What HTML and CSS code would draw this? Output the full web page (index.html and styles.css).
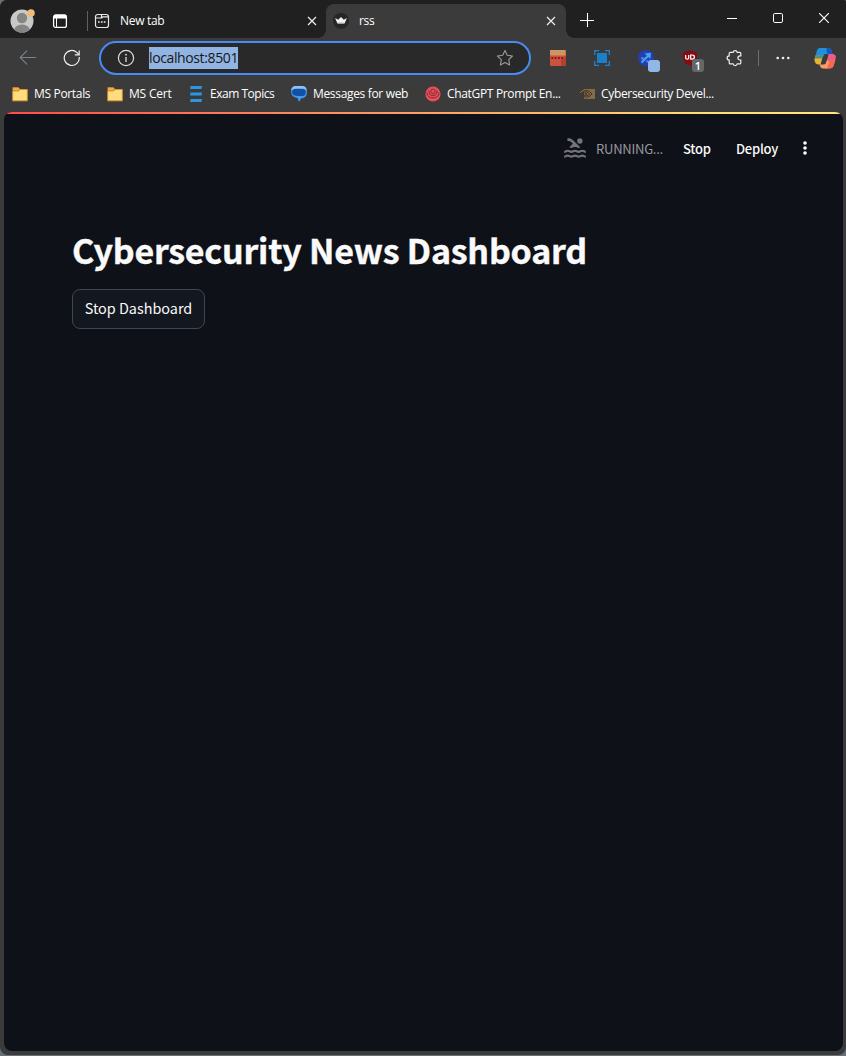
FILE: index.html
```html
<!DOCTYPE html>
<html lang="en">
<head>
<meta charset="utf-8">
<title>rss</title>
<link rel="stylesheet" href="styles.css">
</head>
<body>
<div class="window">
  <header class="tabbar">
    <svg class="avatar" width="26" height="26" viewBox="0 0 26 26"><defs><clipPath id="head"><circle cx="13" cy="14" r="11.5"/></clipPath></defs><g clip-path="url(#head)"><path fill="#c9c9c8" d="M0 0h26v26H0z"/><circle cx="13" cy="11" r="5.2" fill="#858585"/><ellipse cx="13" cy="23.5" rx="8" ry="6" fill="#858585"/></g><circle cx="22" cy="6" r="3.8" fill="#f0bb78"/></svg>
    <svg class="workspaces" width="16" height="16" viewBox="0 0 16 16"><rect x="1.6" y="2" width="12.8" height="12.4" rx="2" fill="none" stroke="#fff" stroke-width="1.3"/><path fill="#fff" d="M2 2h12v3.4H2z"/><path stroke="#fff" d="M4.5 5v9"/></svg>
    <div class="tab tab-first">
      <svg width="16" height="16" viewBox="0 0 16 16" fill="none" stroke="#e8e8e8" stroke-width="1.2"><rect x="1.5" y="1.5" width="13" height="13" rx="2.2"/><path d="M1.500 5h6.200l1.200-1.200h5.600M7.500 1.700v2.900"/><path d="M4 9h1.700m1.200 0h1.700m1.200 0h1.700" stroke-width="1.7"/></svg>
      <span class="tab-title new-title">New tab</span>
      <svg class="close" width="10" height="10" viewBox="0 0 10 10"><path d="M1 1l8 8M9 1L1 9" stroke="#eee" stroke-width="1.2"/></svg>
    </div>
    <div class="tab active">
      <svg width="16" height="16" viewBox="0 0 16 16"><circle cx="8" cy="8" r="8" fill="#262626"/><path fill="#f2f2f2" d="M2.1 5l3.1 1.8L8 4l2.8 2.8 3.1-1.8-2.1 5q-.2.6-.9.6H5.1q-.7 0-.9-.6z"/><path fill="#b6b6b6" d="M4.4 9.4h7.2l-.5 1.2H4.9z"/></svg>
      <span class="tab-title rss-title">rss</span>
      <svg class="close" width="10" height="10" viewBox="0 0 10 10"><path d="M1 1l8 8M9 1L1 9" stroke="#eee" stroke-width="1.2"/></svg>
    </div>
    <svg class="plus" width="14" height="14" viewBox="0 0 14 14"><path d="M7.5 0v14M0 7.5h14" stroke="#fff" stroke-width="1.1"/></svg>
    <svg class="minimize" width="10" height="10" viewBox="0 0 10 10"><path d="M0 5.5h10" stroke="#fff"/></svg>
    <svg class="maximize" width="10" height="10" viewBox="0 0 10 10"><rect x=".5" y=".5" width="9" height="9" rx="1.3" fill="none" stroke="#fff"/></svg>
    <svg class="quit" width="10" height="10" viewBox="0 0 10 10"><path d="M0 0l10 10M10 0L0 10" stroke="#fff" stroke-width="1.1"/></svg>
  </header>

  <nav class="toolbar">
    <div class="slot back"><svg width="18" height="16" viewBox="0 0 18 16" fill="none" stroke="#77828b" stroke-width="1.1"><path d="M17 7.5H1.5M8 .7L1.2 7.5 8 14.3"/></svg></div>
    <div class="slot refresh"><svg width="18" height="18" viewBox="0 0 18 18" fill="none" stroke="#eee" stroke-width="1.2"><path d="M16.2 8a7.5 7.5 0 1 1-2.2-4.4l2 2"/><path d="M16.2 1.4v4.4h-4.4"/></svg></div>
    <div class="address">
      <svg class="info" width="18" height="18" viewBox="0 0 18 18"><circle cx="9" cy="9" r="7.6" fill="none" stroke="#ddd" stroke-width="1.2"/><path d="M9 8v5" stroke="#ddd" stroke-width="1.3"/><circle cx="9" cy="5.7" r=".9" fill="#ddd"/></svg>
      <span class="url">localhost:8501</span>
      <svg class="star" width="18" height="18" viewBox="0 0 18 18"><path d="M9 1.5l2.3 4.8 5.2.7-3.8 3.6.9 5.3L9 13.4l-4.6 2.5.9-5.3L1.5 7l5.2-.7z" fill="none" stroke="#9b9b9b" stroke-width="1.1" stroke-linejoin="round"/></svg>
    </div>
    <div class="slot ext-first"><svg width="16" height="16" viewBox="0 0 16 16"><rect width="16" height="16" rx="1" fill="#c9533c"/><path fill="#cd9563" d="M0 0h15.5v5.5H0z"/><path fill="#b44130" d="M11 10l5-4v9q0 1-1 1h-4z"/><g fill="#86100e"><circle cx="2.3" cy="8" r="1.1"/><circle cx="5.6" cy="8" r="1.1"/><circle cx="8.9" cy="8" r="1.1"/><circle cx="12.2" cy="8" r="1.1"/></g></svg></div>
    <div class="slot"><svg width="16" height="16" viewBox="0 0 16 16"><path fill="#1b80cb" d="M3 3h10v10H3z"/><path d="M.7 5V.7H5M11 .7h4.3V5M15.3 11v4.3H11M5 15.3H.7V11" fill="none" stroke="#2184c9" stroke-width="1.3"/></svg></div>
    <div class="slot"><svg class="ext-badged" width="24" height="24" viewBox="0 0 24 24"><circle cx="9" cy="9" r="8" fill="#263db7"/><path d="M4.5 13.5l7-7" stroke="#42a6e8" stroke-width="2.2"/><path d="M7.5 4.5l6.5-.7-.7 6.3zM4 8l3.5 1L5 11zM9 11l1 3 1.5-2z" fill="#42a6e8"/><rect x="11" y="11" width="12" height="12" rx="3" fill="#91b7e8"/></svg></div>
    <div class="slot ublock"><svg width="16" height="16" viewBox="0 0 16 16"><path fill="#850c12" d="M8 0Q11 2 15 2v6q0 5-7 8-7-3-7-8V2q4 0 7-2z"/><path d="M3.7 5v3q0 1.2 1.5 1.2T6.7 8V5M8.7 5v4.2h1.4q2.3 0 2.3-2.1T10.1 5z" fill="none" stroke="#fff" stroke-width="1.2"/></svg><span class="badge">1</span></div>
    <div class="slot puzzle"><svg width="18" height="18" viewBox="0 0 18 18"><path d="M4.2 3.3h2.9a2.1 2.1 0 0 1 4.1 0h2.6q1 0 1 1v2.5H14a2.1 2.1 0 0 0 0 4.2h.8v2.9q0 1-1 1h-2.6a2.1 2.1 0 0 1-4.1 0H4.2q-1 0-1-1v-2.8a2.1 2.1 0 0 1 0-4.2V4.3q0-1 1-1z" fill="none" stroke="#eee" stroke-width="1.2"/></svg></div>
    <i class="divider"></i>
    <div class="slot more"><svg width="14" height="4" viewBox="0 0 14 4" fill="#eee"><circle cx="1.7" cy="2" r="1.3"/><circle cx="7" cy="2" r="1.3"/><circle cx="12.3" cy="2" r="1.3"/></svg></div>
    <svg class="copilot" width="22" height="21" viewBox="0 0 22 21"><path fill="#218fdc" d="M6 0h8q3 0 3.7 3l.8 3H12q-2 0-2.6 2L8.6 10H1l1.8-7q.8-3 3.2-3z"/><path fill="#1459b9" d="M12.5 0h2q2.2 0 3.2 3l.8 3H14q-2-2-1.5-6z"/><path fill="#5c8f7c" d="M1.6 7h7.6l-1 4H1Q0 9.500 1.600 7z"/><path fill="#e6b335" d="M.3 10.500h7.900l-1.600 5.900H4.500Q1.500 16.400 .8 13.500z"/><path fill="#e95d87" d="M14.500 6H18.500q3.500 0 3.400 3.500l-2 7.500q-1 3.500-4.500 3.500H11z"/><path fill="#f46a50" d="M13 12h8.300l-1.400 5q-1 3.500-4.500 3.500H11z"/><path fill="#f99a69" d="M5.500 16.400H10q1.500 0 2.200-2l1-3 2 3-2 6.100H9Q6.500 20.500 5.500 16.400z"/><path fill="#3b3b3b" d="M10.500 6.500h3.700L11.800 14H8.200z"/></svg>
  </nav>

  <nav class="bookmarks">
    <div class="mark portals"><svg width="16" height="16" viewBox="0 0 16 16"><path fill="#dc8b2b" d="M.5 1.2h6l1.7 1.7h7.3v12.4H.5z"/><path fill="#ffdd7d" stroke="#c9852f" stroke-width=".7" d="M.7 5h5.6l2-1.500h7v11.200H.7z"/><path fill="#f0ad50" d="M1 1.800h5l1.200 1.300L6 4.300H1z"/></svg><span>MS Portals</span></div>
    <div class="mark cert"><svg width="16" height="16" viewBox="0 0 16 16"><path fill="#dc8b2b" d="M.5 1.2h6l1.7 1.7h7.3v12.4H.5z"/><path fill="#ffdd7d" stroke="#c9852f" stroke-width=".7" d="M.7 5h5.6l2-1.500h7v11.200H.7z"/><path fill="#f0ad50" d="M1 1.800h5l1.200 1.300L6 4.300H1z"/></svg><span>MS Cert</span></div>
    <div class="mark exam"><svg width="12" height="16" viewBox="0 0 12 16"><path fill="#2b95e6" d="M.5 0H12l-.5 3H0zM.5 6.500H12l-.5 3H0zM.5 13H12l-.5 3H0z"/></svg><span>Exam Topics</span></div>
    <div class="mark messages"><svg width="16" height="16" viewBox="0 0 16 16"><path fill="#4298ec" d="M5 0h6q5 0 5 6t-6 6.500L8 16l-1.500-4Q0 11 0 5.500T5 0z"/><path fill="#8fc4f2" d="M.2 4Q1 0 5 0h6q4 0 4.700 4l-4-1H5z"/><path fill="#1252a6" d="M5 2.700h6.500q3.300 0 3.300 3.600T11.500 10H7Q1 10 1 6.300T5 2.700z"/></svg><span>Messages for web</span></div>
    <div class="mark chatgpt"><svg width="16" height="16" viewBox="0 0 16 16"><circle cx="8" cy="8" r="7.6" fill="#ed4c58"/><g fill="none" stroke="#662e35" stroke-width=".9"><circle cx="8" cy="5.300" r="2.200"/><path d="M4 4.500q-.4 5 4 5t4-5M2 6.500q.2 5.400 6 5.400t6-5.400"/></g></svg><span>ChatGPT Prompt En...</span></div>
    <div class="mark cyber"><svg width="16" height="16" viewBox="0 0 16 16"><path fill="#806c49" d="M5 3h11v10H5z"/><path d="M.5 7.500Q4 3.800 8 4.500q3 .5 5 3.500-2.500 3.400-6 3.200Q3 11 .5 7.500zm2.600 0Q5 5.700 7.500 6q2 .2 3.200 2-1.500 1.800-3.500 1.600-2.500-.2-4.100-2.100z" fill="none" stroke="#4c3525" stroke-width="1"/><path d="M1 7q2-2.600 4-2.800" stroke="#927746" fill="none"/><circle cx="7" cy="7.800" r="1" fill="#4c3525"/></svg><span>Cybersecurity Devel...</span></div>
  </nav>

  <main class="app">
    <div class="progress"></div>
    <div class="status">
      <svg class="swimmer" width="26" height="26" viewBox="0 0 24 24" fill="#737379"><path d="m10 8-3.250 3.250c.31.12.56.27.77.39.37.23.59.36 1.150.36s.78-.13 1.150-.36c.46-.27 1.080-.64 2.190-.64s1.730.37 2.180.64c.37.22.6.36 1.150.36.55 0 .78-.13 1.150-.36.12-.07.26-.15.41-.23L10.480 5C8.930 3.450 7.500 2.990 5 3v2.500c1.820-.01 2.890.39 4 1.500l1 1z"/><circle cx="16.500" cy="5.500" r="2.500"/><path d="M2 15.500c1.670 0 1.670-1 3.330-1s1.670 1 3.340 1 1.660-1 3.330-1 1.670 1 3.330 1 1.670-1 3.340-1 1.660 1 3.330 1M2 20c1.670 0 1.670-1 3.330-1s1.670 1 3.340 1 1.660-1 3.330-1 1.670 1 3.330 1 1.670-1 3.340-1 1.660 1 3.330 1" fill="none" stroke="#737379" stroke-width="2"/></svg>
      <span class="running">RUNNING...</span><span class="stop">Stop</span><span class="deploy">Deploy</span>
      <svg class="kebab" width="4" height="14" viewBox="0 0 4 14" fill="#fff"><circle cx="2" cy="2" r="1.8"/><circle cx="2" cy="7" r="1.8"/><circle cx="2" cy="12" r="1.8"/></svg>
    </div>
    <section class="content">
      <h1>Cybersecurity News Dashboard</h1>
      <button class="stop-dashboard">Stop Dashboard</button>
    </section>
  </main>
</div>
</body>
</html>
```

FILE: styles.css
```css
* { box-sizing: border-box; }
body { margin: 0; background: #68717a; font-family: "Open Sans", "Noto Sans", sans-serif; }
svg { display: block; flex: none; }
span { white-space: nowrap; }
.window { width: 846px; height: 1055px; display: flex; flex-direction: column; background: #3b3b3b; border-radius: 7px 2px 8px 8px; overflow: hidden; }

.tabbar { height: 38px; display: flex; background: #202020; color: #fff; }
.avatar { margin: 7px 0 0 9px; }
.workspaces { margin: 13px 0 0 17px; }
.tab { display: flex; align-items: center; height: 34px; margin-top: 4px; font-size: 12px; }
.tab-first { width: 239px; margin-left: 19px; padding: 0 9px 0 7px; position: relative; }
.tab-first::before { content: ""; position: absolute; left: 0; top: 7px; width: 1px; height: 20px; background: #606060; }
.active { width: 240px; padding: 0 10px 0 7px; background: #3b3b3b; border-radius: 8px 8px 0 0; position: relative; }
.active::before, .active::after { content: ""; position: absolute; bottom: 0; width: 8px; height: 8px; }
.active::before { left: -8px; background: radial-gradient(circle at 0 0, #202020 7.5px, #3b3b3b 8px); }
.active::after { right: -8px; background: radial-gradient(circle at 100% 0, #202020 7.5px, #3b3b3b 8px); }
.tab-title { margin-left: 10px; padding-bottom: 1px; letter-spacing: -.3px; }
.close { margin-left: auto; }
.plus { margin: 13px 0 0 14px; }
.minimize { margin: 13px 0 0 auto; }
.maximize { margin: 13px 0 0 36px; }
.quit { margin: 13px 17px 0 36px; }

.toolbar { height: 40px; display: flex; align-items: center; }
.slot { width: 44px; display: flex; justify-content: center; align-items: center; flex: none; position: relative; }
.back { margin-left: 6px; }
.refresh { margin-right: 5px; }
.address { width: 432px; height: 34px; display: flex; align-items: center; padding: 0 15px 0 16px; border: 2px solid #478bf4; border-radius: 17px; background: #292929; }
.url { height: 22px; line-height: 21px; margin-left: 14px; font-size: 14px; letter-spacing: -.38px; color: #171717; background: #91b4e2; }
.star { margin-left: auto; }
.ext-first { margin-left: 5px; }
.ext-badged { margin: 6px 0 0 5px; }
.badge { position: absolute; left: 24px; top: 9px; width: 12px; height: 13px; border-radius: 3px; background: #63676a; color: #fff; font-size: 11px; font-weight: 600; line-height: 13px; text-align: center; }
.puzzle svg { margin-left: 2px; }
.divider { width: 1px; height: 16px; margin-left: 2px; background: #65727a; }
.more { width: 48px; }
.copilot { margin-left: 7px; }

.bookmarks { height: 34px; display: flex; align-items: center; padding: 0 0 2px 12px; color: #fff; font-size: 12px; }
.mark { display: flex; align-items: center; gap: 6px; flex: none; letter-spacing: -.33px; }
.mark span { padding-bottom: 2px; }
.portals { width: 95px; }
.cert { width: 83px; letter-spacing: -.2px; }
.exam { width: 101px; gap: 8px; letter-spacing: -.48px; }
.messages { width: 134px; }
.chatgpt { width: 154px; }

.app { width: 839px; height: 939px; margin-left: 4px; background: #0e1117; border-radius: 8px; overflow: hidden; font-family: "Noto Sans CJK SC", sans-serif; color: #fafafa; }
.progress { height: 2px; background: linear-gradient(90deg, #ff4b4b, #ff8c62 38%, #ffb46a 62%, #ffdf75 84%, #ffe680); }
.status { height: 60px; display: flex; align-items: center; margin-top: 4px; font-size: 13px; }
.status span { letter-spacing: -.25px; }
.swimmer { margin-left: 558px; }
.running { width: 87px; margin-left: 8px; color: #9898a0; }
.stop { width: 53px; font-weight: 500; }
.deploy { width: 67px; font-weight: 500; }
.content { padding: 50px 0 0 68px; }
h1 { margin: 0; height: 44px; line-height: 44px; font-size: 34px; font-weight: 700; letter-spacing: -.23px; -webkit-text-stroke: .4px #fafafa; white-space: nowrap; }
.stop-dashboard { display: block; width: 133px; height: 40px; margin: 17px 0 0; padding: 0 0 2px; border: 1px solid #43454d; border-radius: 8px; background: #131720; color: #fafafa; font: 14.4px/36px "Noto Sans CJK SC", sans-serif; }
```
